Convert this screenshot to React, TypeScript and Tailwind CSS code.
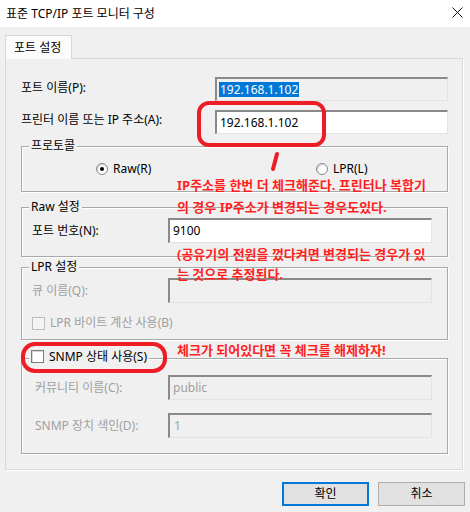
import React from "react";

const inputBase =
  "border-t-2 border-l-2 border-r border-b border-t-[#8a8a8a] border-l-[#8a8a8a] border-r-[#e3e3e3] border-b-[#e3e3e3] flex items-center pl-[2px] text-[12px] leading-none";

function GroupBox({
  label,
  className,
  children,
}: {
  label: React.ReactNode;
  className: string;
  children?: React.ReactNode;
}) {
  return (
    <div
      className={`relative w-[427px] border border-[#a9a9a9] shadow-[inset_1px_1px_0_#ffffff,1px_1px_0_#ffffff] ${className}`}
    >
      <div className="absolute left-[7px] top-[-9px] px-[2px] bg-[#f0f0f0] leading-[16px] flex items-center">
        {label}
      </div>
      {children}
    </div>
  );
}

function CheckBox({ disabled }: { disabled?: boolean }) {
  return (
    <span
      className={`inline-block w-[13px] h-[13px] border ${
        disabled
          ? "border-[#bdbdbd] bg-[#f4f4f4]"
          : "border-[#7d7d7d] bg-white shadow-[inset_1px_1px_0_#d6d6d6]"
      }`}
    />
  );
}

function Radio({ checked }: { checked?: boolean }) {
  return (
    <span className="relative inline-flex items-center justify-center w-[12px] h-[12px] rounded-full border border-[#8a8a8a] bg-white shadow-[inset_1px_1px_1px_#cfcfcf]">
      {checked && <span className="w-[4px] h-[4px] rounded-full bg-black" />}
    </span>
  );
}

export default function App() {
  return (
    <div className="relative w-[470px] h-[512px] bg-[#f0f0f0] overflow-hidden font-['Noto_Sans','Noto_Sans_CJK_KR',sans-serif] text-[12px] text-black">
      {/* title bar */}
      <div className="h-[27px] bg-white flex items-center justify-between pl-[6px] pr-[7px]">
        <span className="leading-none">표준 TCP/IP 포트 모니터 구성</span>
        <svg width="11" height="11" viewBox="0 0 11 11" className="mt-[-2px]">
          <path d="M0.5 0.5 L10.5 10.5 M10.5 0.5 L0.5 10.5" stroke="#111" strokeWidth="1" />
        </svg>
      </div>

      <div className="pt-[8px] pl-[5px] pr-[7px]">
        {/* tab */}
        <div className="relative z-10 -mb-px w-[67px] h-[24px] bg-[#fbfbfb] border border-b-0 border-[#d9d9d9] flex items-center pl-[8px] leading-none">
          포트 설정
        </div>
        {/* panel */}
        <div className="h-[412px] border border-[#d9d9d9] shadow-[1px_1px_0_#ffffff] pl-[15px] pt-[18px]">
          <div className="flex flex-col gap-[9px] w-[427px]">
            <div className="flex items-center justify-between">
              <span className="leading-none -mt-[3px]">포트 이름(P):</span>
              <div className={`${inputBase} w-[233px] h-[24px] bg-[#f0f0f0]`}>
                <span className="bg-[#0078d7] text-white px-[1px] h-[15px] flex items-center">
                  192.168.1.102
                </span>
              </div>
            </div>
            <div className="flex items-center justify-between">
              <span className="leading-none -mt-[5px]">프린터 이름 또는 IP 주소(A):</span>
              <div className={`${inputBase} w-[233px] h-[24px] bg-white pl-[3px]`}>192.168.1.102</div>
            </div>
          </div>

          {/* protocol */}
          <GroupBox label="프로토콜" className="mt-[12px] h-[46px]">
            <div className="flex items-center pl-[74px] pt-[14px] h-[30px]">
              <div className="flex items-center gap-[5px] w-[220px]">
                <Radio checked />
                <span className="leading-none">Raw(R)</span>
              </div>
              <div className="flex items-center gap-[5px]">
                <Radio />
                <span className="leading-none">LPR(L)</span>
              </div>
            </div>
          </GroupBox>

          {/* raw */}
          <GroupBox label="Raw 설정" className="mt-[15px] h-[50px]">
            <div className="flex items-center justify-between pl-[10px] pr-[15px] pt-[10px]">
              <span className="leading-none">포트 번호(N):</span>
              <div className={`${inputBase} w-[264px] h-[25px] bg-white pl-[3px]`}>9100</div>
            </div>
          </GroupBox>

          {/* lpr */}
          <GroupBox label="LPR 설정" className="mt-[10px] h-[73px]">
            <div className="flex items-center justify-between pl-[10px] pr-[15px] pt-[10px]">
              <span className="leading-none text-[#a0a0a0]">큐 이름(Q):</span>
              <div className={`${inputBase} w-[264px] h-[25px] bg-[#f0f0f0]`} />
            </div>
            <div className="flex items-center gap-[5px] pl-[10px] mt-[13px] h-[14px]">
              <CheckBox disabled />
              <span className="leading-none text-[#a0a0a0]">LPR 바이트 계산 사용(B)</span>
            </div>
          </GroupBox>

          {/* snmp */}
          <GroupBox
            label={
              <span className="flex items-center gap-[5px]">
                <CheckBox />
                <span className="leading-none">SNMP 상태 사용(S)</span>
              </span>
            }
            className="mt-[18px] h-[96px]"
          >
            <div className="flex flex-col gap-[13px] pl-[13px] pr-[15px] pt-[16px]">
              <div className="flex items-center justify-between">
                <span className="leading-none text-[#a0a0a0]">커뮤니티 이름(C):</span>
                <div className={`${inputBase} w-[264px] h-[25px] bg-[#f0f0f0] pl-[3px] text-[#a0a0a0]`}>public</div>
              </div>
              <div className="flex items-center justify-between">
                <span className="leading-none text-[#a0a0a0]">SNMP 장치 색인(D):</span>
                <div className={`${inputBase} w-[264px] h-[25px] bg-[#f0f0f0] pl-[4px] text-[#9aa4b0]`}>1</div>
              </div>
            </div>
          </GroupBox>
        </div>
      </div>

      {/* buttons */}
      <div className="flex justify-end gap-[9px] pr-[5px] mt-[12px]">
        <button className="w-[87px] h-[24px] bg-[#e1e1e1] border-2 border-[#0078d7] flex items-center justify-center leading-none">
          확인
        </button>
        <button className="w-[87px] h-[24px] bg-[#e1e1e1] border border-[#adadad] flex items-center justify-center leading-none">
          취소
        </button>
      </div>

      {/* annotations */}
      <svg className="absolute inset-0 pointer-events-none" width="470" height="512" viewBox="0 0 470 512">
        <rect x="199" y="103" width="125" height="42" rx="10" fill="none" stroke="#ee1c25" strokeWidth="4" />
        <path d="M277 154 L273 169" stroke="#ee1c25" strokeWidth="4" strokeLinecap="round" />
        <rect x="23" y="344" width="142" height="27" rx="12" fill="none" stroke="#ee1c25" strokeWidth="4" />
      </svg>
      <div className="absolute left-[177px] top-[174px] text-[13px] font-bold text-[#ff1f1f] leading-[22px] whitespace-nowrap pointer-events-none">
        <div>IP주소를 한번 더 체크해준다. 프린터나 복합기</div>
        <div>의 경우 IP주소가 변경되는 경우도있다.</div>
      </div>
      <div className="absolute left-[177px] top-[244px] text-[13px] font-bold text-[#ff1f1f] leading-[20px] whitespace-nowrap pointer-events-none">
        <div>(공유기의 전원을 껐다켜면 변경되는 경우가 있</div>
        <div>는 것으로 추정된다.</div>
      </div>
      <div className="absolute left-[177px] top-[340px] text-[13px] font-bold text-[#ff1f1f] leading-[20px] whitespace-nowrap pointer-events-none">
        체크가 되어있다면 꼭 체크를 해제하자!
      </div>
    </div>
  );
}
